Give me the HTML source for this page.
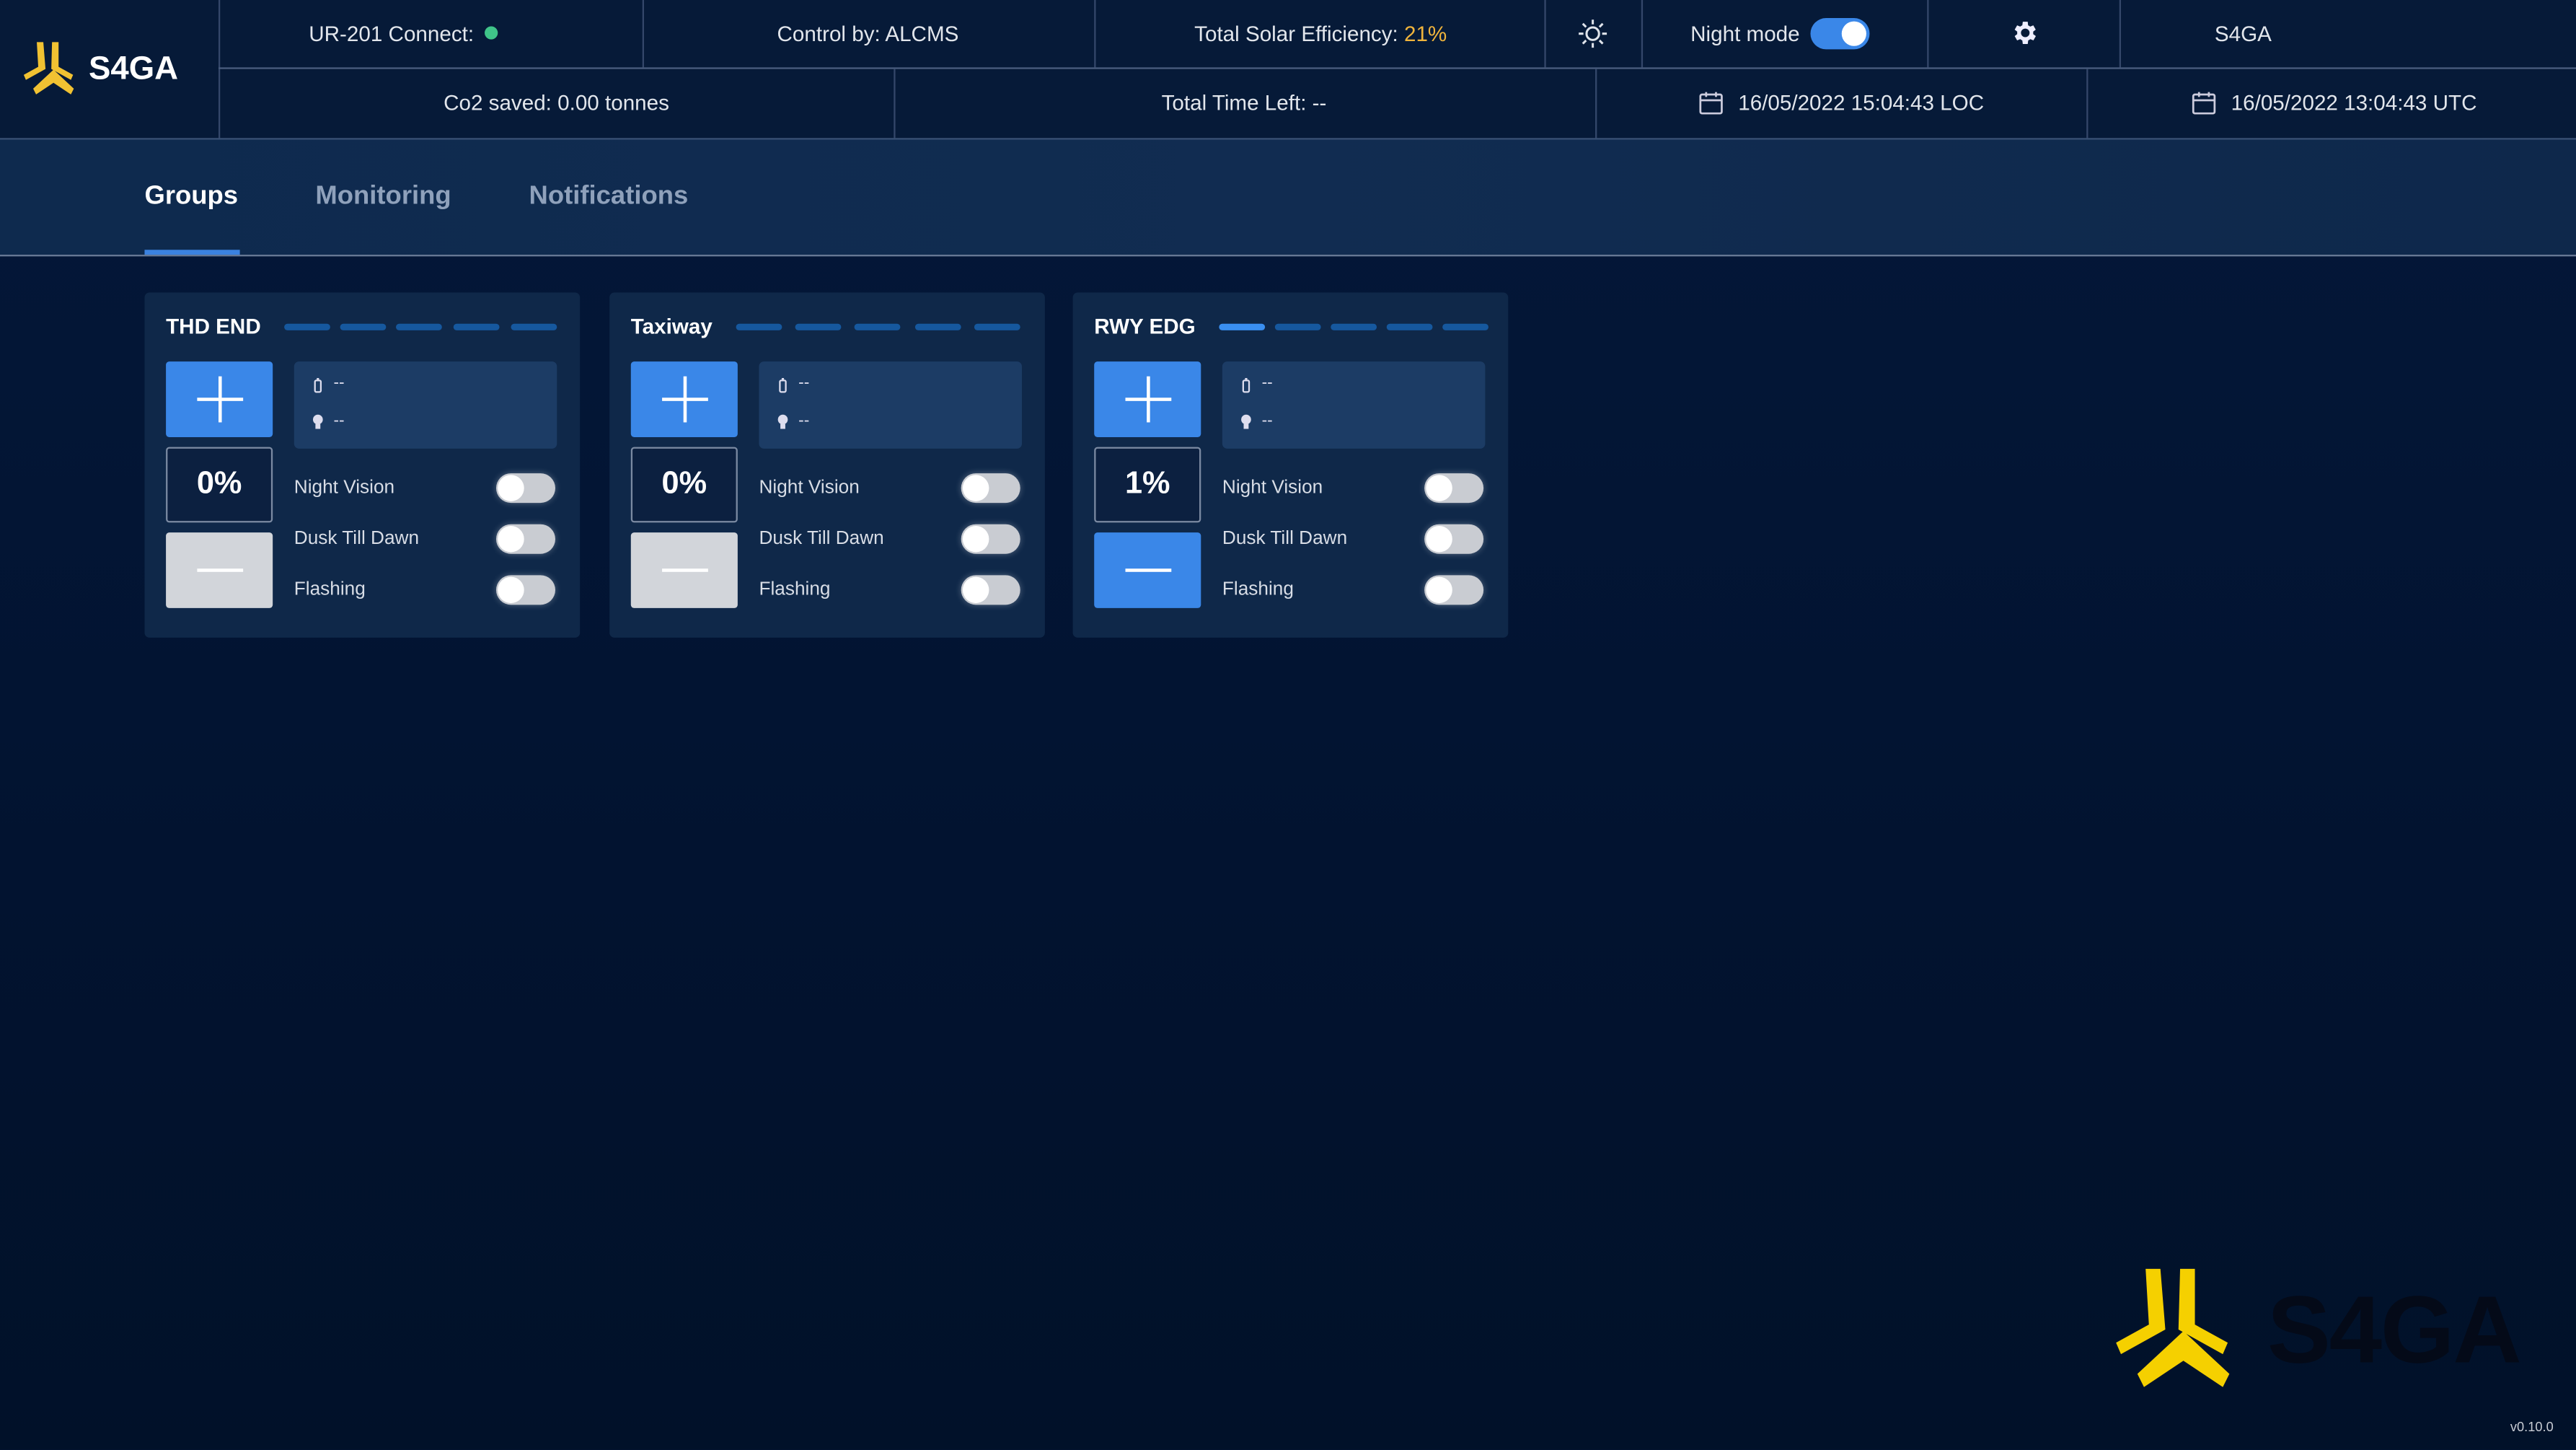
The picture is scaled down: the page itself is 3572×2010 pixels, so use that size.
<!DOCTYPE html>
<html><head><meta charset="utf-8"><style>
html,body{margin:0;padding:0;width:3572px;height:2010px;overflow:hidden;background:#021430;}
#w{position:absolute;left:0;top:0;width:1568px;height:882px;transform:scale(2.2781);transform-origin:0 0;font-family:"Liberation Sans",sans-serif;color:#e6eaf0;background:linear-gradient(#04183a,#021330 60%,#011129);}
.a{position:absolute}
.hdr{background:#061a38}
.vl{position:absolute;width:1px;background:#34476a}
.hl{position:absolute;height:1px;background:#4a5d7e}
.t{position:absolute;font-size:13px;white-space:nowrap;color:#e2e6ec}
.card{position:absolute;top:178px;width:265px;height:210px;background:#0f2849;border-radius:3px}
.card .ttl{position:absolute;left:13px;top:13px;font-size:13px;font-weight:bold;color:#fff}
.dash{position:absolute;top:19px;width:28px;height:4px;background:#16589e;border-radius:2px}
.plus{position:absolute;left:13px;top:42px;width:65px;height:46px;background:#3a87e8;border-radius:2px}
.plus:before{content:"";position:absolute;left:19px;top:22px;width:28px;height:2px;background:#fff}
.plus:after{content:"";position:absolute;left:32px;top:9px;width:2px;height:28px;background:#fff}
.pct{position:absolute;left:13px;top:94px;width:63px;height:44px;border:1px solid #7b8aa2;border-radius:2px;background:#0c2040;font-size:19px;font-weight:bold;text-align:center;line-height:44px;color:#fff}
.minus{position:absolute;left:13px;top:146px;width:65px;height:46px;background:#d2d5da;border-radius:2px}
.minus:before{content:"";position:absolute;left:19px;top:22px;width:28px;height:2px;background:#fff}
.info{position:absolute;left:91px;top:42px;width:160px;height:53px;background:#1c3c65;border-radius:3px;font-size:10px;color:#dde}
.lab{position:absolute;left:91px;font-size:11.5px;color:#d8dde6}
.tg{position:absolute;left:214px;width:36px;height:18px;border-radius:9px;background:#c9ccd2;box-shadow:0 0 4px rgba(255,255,255,.3)}
.tg:before{content:"";position:absolute;left:1px;top:1px;width:16px;height:16px;border-radius:8px;background:#fff}
</style></head><body><div id="w">
<div class="a hdr" style="left:0;top:0;width:1568px;height:84px"></div>
<svg class="a" style="left:14px;top:25px" width="38" height="34" viewBox="0 0 86 74"><g fill="#f1c232"><path d="M19 0h9l3 37-27 15-3-7 20-11z"/><path d="M40 0h9l0 34 20 11-3 7-27-15z"/><path d="M42 38l28 26-4 8-24-16-24 16-4-8z"/></g></svg>
<div class="t" style="left:54px;top:31px;font-size:20px;font-weight:bold;color:#fff">S4GA</div>
<div class="vl" style="left:133px;top:0;height:84px"></div>
<div class="hl" style="left:133px;top:41px;width:1435px"></div>
<div class="hl" style="left:0;top:84px;width:1568px;background:#3c5478"></div>
<div class="vl" style="left:391px;top:0;height:41px"></div>
<div class="vl" style="left:666px;top:0;height:41px"></div>
<div class="vl" style="left:940px;top:0;height:41px"></div>
<div class="vl" style="left:999px;top:0;height:41px"></div>
<div class="vl" style="left:1173px;top:0;height:41px"></div>
<div class="vl" style="left:1290px;top:0;height:41px"></div>
<div class="vl" style="left:544px;top:42px;height:42px"></div>
<div class="vl" style="left:971px;top:42px;height:42px"></div>
<div class="vl" style="left:1270px;top:42px;height:42px"></div>
<div class="t" style="left:188px;top:13px">UR-201 Connect:</div>
<div class="a" style="left:295px;top:16px;width:8px;height:8px;border-radius:4px;background:#3fc489"></div>
<div class="t" style="left:473px;top:13px">Control by: ALCMS</div>
<div class="t" style="left:727px;top:13px">Total Solar Efficiency: <span style="color:#f0b43c">21%</span></div>
<svg class="a" style="left:960px;top:11px" width="19" height="19" viewBox="0 0 20 20" fill="none" stroke="#dfe3ea" stroke-width="1.4"><circle cx="10" cy="10" r="4"/><path d="M10 1v3M10 16v3M1 10h3M16 10h3M3.6 3.6l2.1 2.1M14.3 14.3l2.1 2.1M3.6 16.4l2.1-2.1M14.3 5.7l2.1-2.1"/></svg>
<div class="t" style="left:1029px;top:13px">Night mode</div>
<div class="a" style="left:1102px;top:11px;width:36px;height:19px;border-radius:10px;background:#3a87e8"><div class="a" style="left:19px;top:2px;width:15px;height:15px;border-radius:8px;background:#fff"></div></div>
<svg class="a" style="left:1223px;top:11px" width="18" height="18" viewBox="0 0 24 24"><path fill="#eef" d="M19.4 13a7.5 7.5 0 000-2l2.1-1.6-2-3.5-2.5 1a7.3 7.3 0 00-1.7-1L15 3h-4l-.4 2.9a7.3 7.3 0 00-1.7 1l-2.5-1-2 3.5L6.5 11a7.5 7.5 0 000 2l-2.1 1.6 2 3.5 2.5-1a7.3 7.3 0 001.7 1L11 21h4l.4-2.9a7.3 7.3 0 001.7-1l2.5 1 2-3.5zM13 15.5a3.5 3.5 0 110-7 3.5 3.5 0 010 7z"/></svg>
<div class="t" style="left:1348px;top:13px">S4GA</div>
<div class="t" style="left:270px;top:55px">Co2 saved: 0.00 tonnes</div>
<div class="t" style="left:707px;top:55px">Total Time Left: --</div>
<svg class="a" style="left:1034px;top:55px" width="15" height="15" viewBox="0 0 15 15" fill="none" stroke="#ccd" stroke-width="1.2"><rect x="1" y="2.5" width="13" height="11.5" rx="1"/><path d="M1 6h13M4.5 1v3M10.5 1v3"/></svg>
<div class="t" style="left:1058px;top:55px">16/05/2022 15:04:43 LOC</div>
<svg class="a" style="left:1334px;top:55px" width="15" height="15" viewBox="0 0 15 15" fill="none" stroke="#ccd" stroke-width="1.2"><rect x="1" y="2.5" width="13" height="11.5" rx="1"/><path d="M1 6h13M4.5 1v3M10.5 1v3"/></svg>
<div class="t" style="left:1358px;top:55px">16/05/2022 13:04:43 UTC</div>
<div class="a" style="left:0;top:85px;width:1568px;height:70px;background:linear-gradient(90deg,#0e2a4e,#112c51 50%,#0e284b)"></div>
<div class="hl" style="left:0;top:155px;width:1568px;background:#6a7c98"></div>
<div class="a" style="left:88px;top:152px;width:58px;height:3px;background:#3b82e0"></div>
<div class="t" style="left:88px;top:111px;font-size:16px;font-weight:bold;color:#fff">Groups</div>
<div class="t" style="left:192px;top:111px;font-size:16px;font-weight:bold;color:#8fa1bb">Monitoring</div>
<div class="t" style="left:322px;top:111px;font-size:16px;font-weight:bold;color:#8fa1bb">Notifications</div>

<div class="card" style="left:88px">
<div class="ttl">THD END</div>
<div class="dash" style="left:85px"></div><div class="dash" style="left:119px"></div><div class="dash" style="left:153px"></div><div class="dash" style="left:188px"></div><div class="dash" style="left:223px"></div>
<div class="plus"></div><div class="info"><svg class="a" style="left:12px;top:10px" width="5" height="9"><rect x=".7" y="1.5" width="3.6" height="7" rx=".8" fill="none" stroke="#dde" stroke-width="1"/><rect x="1.8" y="0" width="1.4" height="1.5" fill="#dde"/></svg><span class="a" style="left:24px;top:8px">--</span><svg class="a" style="left:11px;top:32px" width="7" height="9"><circle cx="3.5" cy="3.3" r="3" fill="#dde"/><rect x="2" y="6" width="3" height="3" fill="#dde"/></svg><span class="a" style="left:24px;top:31px">--</span></div>
<div class="pct">0%</div><div class="minus"></div>
<div class="lab" style="top:113px">Night Vision</div><div class="lab" style="top:144px">Dusk Till Dawn</div><div class="lab" style="top:175px">Flashing</div>
<div class="tg" style="top:110px"></div><div class="tg" style="top:141px"></div><div class="tg" style="top:172px"></div>
</div>
<div class="card" style="left:371px">
<div class="ttl">Taxiway</div>
<div class="dash" style="left:77px"></div><div class="dash" style="left:113px"></div><div class="dash" style="left:149px"></div><div class="dash" style="left:186px"></div><div class="dash" style="left:222px"></div>
<div class="plus"></div><div class="info"><svg class="a" style="left:12px;top:10px" width="5" height="9"><rect x=".7" y="1.5" width="3.6" height="7" rx=".8" fill="none" stroke="#dde" stroke-width="1"/><rect x="1.8" y="0" width="1.4" height="1.5" fill="#dde"/></svg><span class="a" style="left:24px;top:8px">--</span><svg class="a" style="left:11px;top:32px" width="7" height="9"><circle cx="3.5" cy="3.3" r="3" fill="#dde"/><rect x="2" y="6" width="3" height="3" fill="#dde"/></svg><span class="a" style="left:24px;top:31px">--</span></div>
<div class="pct">0%</div><div class="minus"></div>
<div class="lab" style="top:113px">Night Vision</div><div class="lab" style="top:144px">Dusk Till Dawn</div><div class="lab" style="top:175px">Flashing</div>
<div class="tg" style="top:110px"></div><div class="tg" style="top:141px"></div><div class="tg" style="top:172px"></div>
</div>
<div class="card" style="left:653px">
<div class="ttl">RWY EDG</div>
<div class="dash" style="left:89px;background:#3a8ff0"></div><div class="dash" style="left:123px"></div><div class="dash" style="left:157px"></div><div class="dash" style="left:191px"></div><div class="dash" style="left:225px"></div>
<div class="plus"></div><div class="info"><svg class="a" style="left:12px;top:10px" width="5" height="9"><rect x=".7" y="1.5" width="3.6" height="7" rx=".8" fill="none" stroke="#dde" stroke-width="1"/><rect x="1.8" y="0" width="1.4" height="1.5" fill="#dde"/></svg><span class="a" style="left:24px;top:8px">--</span><svg class="a" style="left:11px;top:32px" width="7" height="9"><circle cx="3.5" cy="3.3" r="3" fill="#dde"/><rect x="2" y="6" width="3" height="3" fill="#dde"/></svg><span class="a" style="left:24px;top:31px">--</span></div>
<div class="pct">1%</div><div class="minus" style="background:#3a87e8"></div>
<div class="lab" style="top:113px">Night Vision</div><div class="lab" style="top:144px">Dusk Till Dawn</div><div class="lab" style="top:175px">Flashing</div>
<div class="tg" style="top:110px"></div><div class="tg" style="top:141px"></div><div class="tg" style="top:172px"></div>
</div>
<svg class="a" style="left:1287px;top:772px" width="86" height="74" viewBox="0 0 86 74"><g fill="#f5d000"><path d="M19 0h9l3 37-27 15-3-7 20-11z"/><path d="M40 0h9l0 34 20 11-3 7-27-15z"/><path d="M42 38l28 26-4 8-24-16-24 16-4-8z"/></g></svg>
<div class="t" style="left:1380px;top:776px;font-size:58px;font-weight:bold;color:#040a18;letter-spacing:-1px">S4GA</div>
<div class="t" style="left:1528px;top:864px;font-size:8px;color:#c8ccd4">v0.10.0</div>
</div></body></html>
